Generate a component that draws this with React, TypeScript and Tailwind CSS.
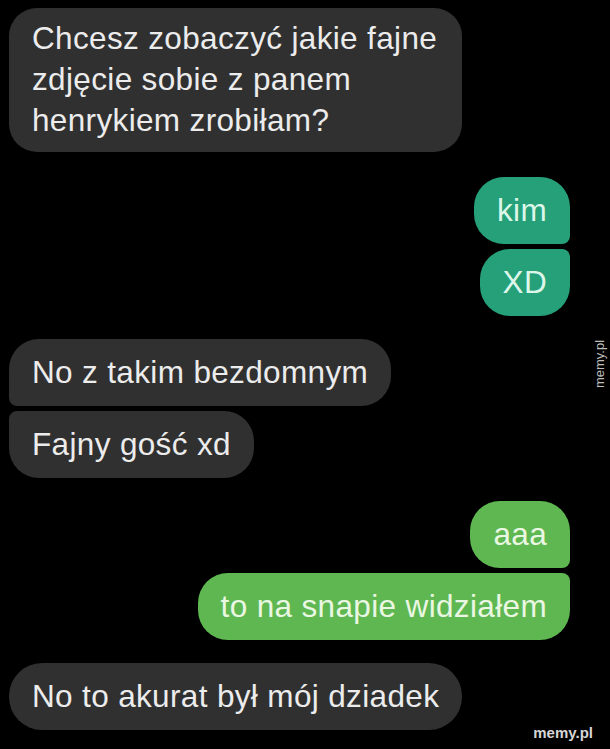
import React from "react";

function Bubble({
  children,
  kind,
  corners,
  className = "",
}: {
  children: React.ReactNode;
  kind: "in" | "teal" | "lime";
  corners: string;
  className?: string;
}) {
  const color =
    kind === "in"
      ? "bg-[#303030] text-[#ececec] self-start"
      : kind === "teal"
      ? "bg-[#25a079] text-[#dcf7ea] self-end"
      : "bg-[#5fb752] text-[#eaf7e2] self-end";
  return (
    <div
      className={`${color} ${corners} px-[23px] text-[31.5px] leading-[41px] tracking-[0.35px] ${className}`}
    >
      {children}
    </div>
  );
}

export default function App() {
  return (
    <div
      className="relative w-[610px] h-[749px] bg-black overflow-hidden"
      style={{ fontFamily: "'Liberation Sans', Arial, sans-serif" }}
    >
      <div className="flex flex-col pt-[8px] pl-[9px] pr-[40px]">
        <Bubble kind="in" corners="rounded-[28px]" className="w-[453px] pt-[10px] pb-[11px]">
          Chcesz zobaczyć jakie fajne
          <br />
          zdjęcie sobie z panem
          <br />
          henrykiem zrobiłam?
        </Bubble>

        <Bubble kind="teal" corners="rounded-[30px] rounded-br-[8px]" className="mt-[25px] py-[13px]">
          kim
        </Bubble>
        <Bubble kind="teal" corners="rounded-[30px] rounded-tr-[8px]" className="mt-[5px] py-[13px]">
          XD
        </Bubble>

        <Bubble kind="in" corners="rounded-[30px] rounded-bl-[8px]" className="mt-[23px] py-[13px]">
          No z takim bezdomnym
        </Bubble>
        <Bubble kind="in" corners="rounded-[30px] rounded-tl-[8px]" className="mt-[5px] py-[13px]">
          Fajny gość xd
        </Bubble>

        <Bubble kind="lime" corners="rounded-[30px] rounded-br-[8px]" className="mt-[23px] py-[13px]">
          aaa
        </Bubble>
        <Bubble kind="lime" corners="rounded-[30px] rounded-tr-[8px]" className="mt-[5px] py-[13px]">
          to na snapie widziałem
        </Bubble>

        <Bubble kind="in" corners="rounded-[33px]" className="mt-[23px] py-[13px]">
          No to akurat był mój dziadek
        </Bubble>
      </div>

      <div className="absolute right-[17px] bottom-[9px] text-[15px] font-bold text-[#d6d6d6] leading-none">
        memy.pl
      </div>
      <div className="absolute left-[599px] top-[364px] -translate-x-1/2 -translate-y-1/2 -rotate-90 text-[13px] text-[#bdbdbd] leading-none whitespace-nowrap">
        memy.pl
      </div>
    </div>
  );
}
